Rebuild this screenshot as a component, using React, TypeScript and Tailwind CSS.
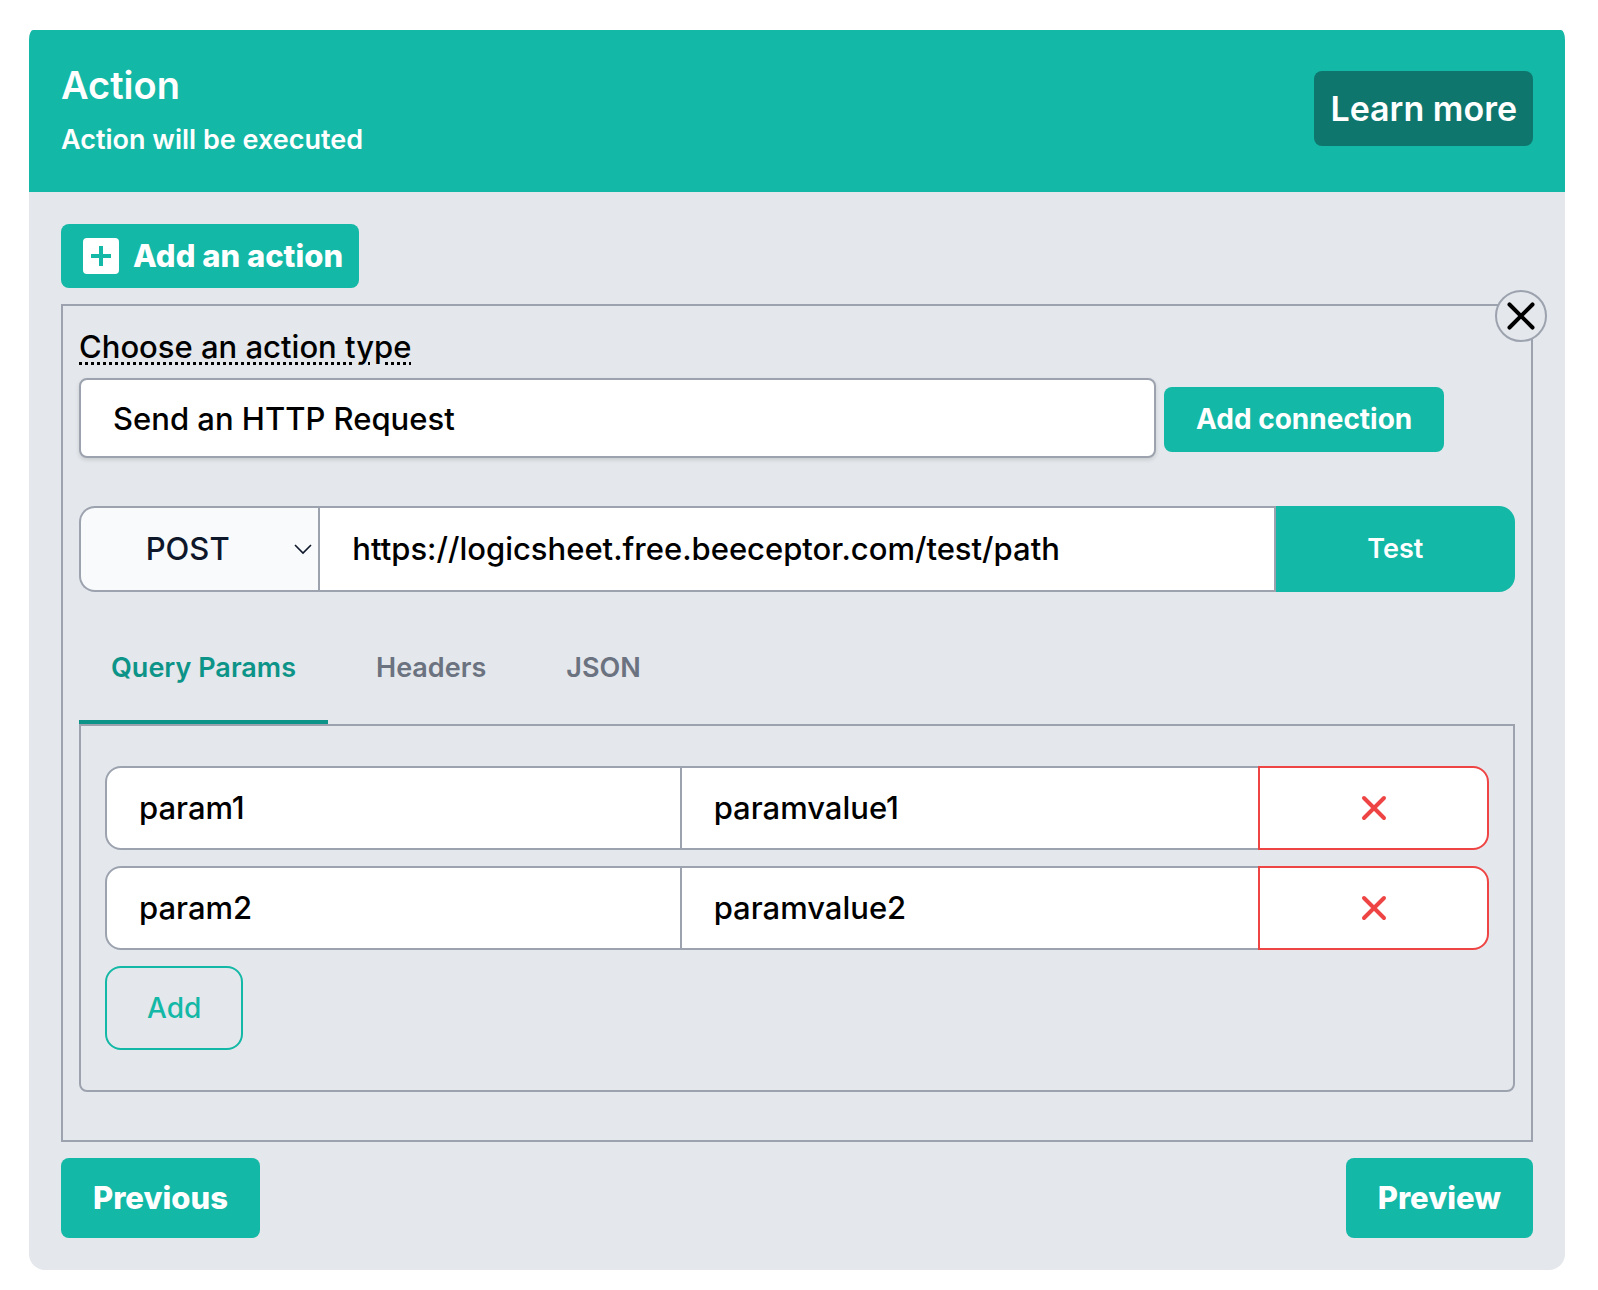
import React, { useState } from "react";

const initialParams = [
  { id: 1, name: "param1", value: "paramvalue1" },
  { id: 2, name: "param2", value: "paramvalue2" },
];

const tabs = ["Query Params", "Headers", "JSON"];

function CrossIcon({ className }: { className: string }) {
  return (
    <svg
      className={className}
      viewBox="0 0 24 24"
      fill="none"
      stroke="currentColor"
      strokeLinecap="round"
      strokeLinejoin="round"
      aria-hidden="true"
    >
      <path d="M6 18L18 6M6 6l12 12" />
    </svg>
  );
}

function PlusSquareIcon() {
  return (
    <svg className="size-12 shrink-0" viewBox="0 0 24 24" aria-hidden="true">
      <rect x="3" y="3" width="18" height="18" rx="2" fill="#fff" />
      <path d="M12 7v10M7 12h10" stroke="#14b8a6" strokeWidth="2" fill="none" />
    </svg>
  );
}

export default function App() {
  const [active, setActive] = useState("Query Params");
  const [params, setParams] = useState(initialParams);

  return (
    <main className="min-h-screen bg-white pt-[30px] pr-[33px] pb-5 pl-[29px] font-['Inter',sans-serif] text-[31px] font-medium text-black">
      <section className="overflow-hidden rounded-b-2xl bg-[#e4e7eb] [border-top-left-radius:4px_10px] [border-top-right-radius:4px_10px]">
        <header className="flex items-center justify-between bg-[#14b8a6] px-8 pt-[26px] pb-8 font-semibold text-white">
          <div>
            <h1 className="text-[38px] leading-[58px]">Action</h1>
            <p className="mt-1.5 text-[27px] leading-10">Action will be executed</p>
          </div>
          <a href="#learn" className="rounded-lg bg-[#0f766e] px-4 py-2 text-[34px] leading-[59px]">
            Learn more
          </a>
        </header>

        <div className="p-8">
          <button type="button" className="flex items-center gap-2 rounded-lg bg-[#14b8a6] px-4 py-2 leading-[48px] font-extrabold text-white">
            <PlusSquareIcon />
            Add an action
          </button>

          <div className="relative mt-4 border-2 border-[#9ca3af] px-4 pt-4 pb-12">
            <button
              type="button"
              aria-label="Remove action"
              className="absolute -top-4 -right-4 flex size-[52px] items-center justify-center rounded-full border-2 border-[#9ca3af] bg-[#e4e7eb]"
            >
              <CrossIcon className="size-[46px] shrink-0 stroke-[2.1]" />
            </button>

            <label
              htmlFor="action-type"
              className="block w-fit leading-[50px] underline decoration-dotted decoration-[3px] underline-offset-4"
            >
              Choose an action type
            </label>
            <div className="mt-1.5 flex items-center gap-2">
              <input
                id="action-type"
                defaultValue="Send an HTTP Request"
                className="h-20 w-3/4 rounded-lg border-2 border-[#9ca3af] bg-white px-8 shadow-[0_2px_4px_rgba(0,0,0,0.12)] outline-none"
              />
              <button type="button" className="mt-[3px] rounded-lg bg-[#14b8a6] px-8 text-[28px] leading-[65px] font-bold whitespace-nowrap text-white">
                Add connection
              </button>
            </div>

            <div className="mt-12 grid h-[86px] grid-cols-6">
              <div className="relative">
                <select
                  aria-label="Request method"
                  defaultValue="POST"
                  className="size-full appearance-none rounded-l-2xl border-2 border-r-0 border-[#9ca3af] bg-[#f8fafc] pr-6 text-center text-[#0f172a] outline-none [text-align-last:center]"
                >
                  <option>GET</option>
                  <option>POST</option>
                  <option>PUT</option>
                  <option>DELETE</option>
                </select>
                <svg
                  className="pointer-events-none absolute top-[37px] right-[5px] h-3 w-5"
                  viewBox="0 0 20 12"
                  fill="none"
                  stroke="#0f172a"
                  strokeWidth="1.6"
                  aria-hidden="true"
                >
                  <path d="M2 2l8 8 8-8" />
                </svg>
              </div>
              <input
                aria-label="Request URL"
                defaultValue="https://logicsheet.free.beeceptor.com/test/path"
                className="col-span-4 min-w-0 border-2 border-[#9ca3af] bg-white px-8 outline-none"
              />
              <button type="button" className="rounded-r-2xl bg-[#14b8a6] text-[27px] font-semibold text-white">
                Test
              </button>
            </div>

            <div role="tablist" className="mt-6 flex gap-4 text-[27px] font-semibold">
              {tabs.map((tab) => (
                <button
                  key={tab}
                  type="button"
                  role="tab"
                  aria-selected={tab === active}
                  onClick={() => setActive(tab)}
                  className={
                    tab === active
                      ? "border-b-4 border-[#0d9488] px-8 py-8 leading-10 text-[#0d9488]"
                      : "border-b-4 border-transparent px-8 py-8 leading-10 text-[#6b7280]"
                  }
                >
                  {tab}
                </button>
              ))}
            </div>

            <div role="tabpanel" aria-label={active} className="flex flex-col gap-4 rounded-b-lg border-2 border-[#9ca3af] px-6 py-10">
              {params.map((param) => (
                <div key={param.id} className="grid h-[84px] grid-cols-12">
                  <input
                    aria-label="Parameter name"
                    defaultValue={param.name}
                    className="col-span-5 min-w-0 rounded-l-2xl border-2 border-[#9ca3af] bg-white px-8 outline-none"
                  />
                  <input
                    aria-label="Parameter value"
                    defaultValue={param.value}
                    className="col-span-5 min-w-0 border-y-2 border-[#9ca3af] bg-white px-8 outline-none"
                  />
                  <button
                    type="button"
                    aria-label={"Remove " + param.name}
                    onClick={() => setParams(params.filter((p) => p.id !== param.id))}
                    className="col-span-2 flex items-center justify-center rounded-r-2xl border-2 border-[#ef4444] bg-white text-[#ef4444]"
                  >
                    <CrossIcon className="size-10 stroke-[2.4]" />
                  </button>
                </div>
              ))}
              <button
                type="button"
                onClick={() => setParams([...params, { id: Date.now(), name: "", value: "" }])}
                className="h-[84px] self-start rounded-2xl border-2 border-[#14b8a6] px-10 text-[28px] text-[#14b8a6]"
              >
                Add
              </button>
            </div>
          </div>

          <div className="mt-4 flex justify-between font-extrabold text-white">
            <button type="button" className="rounded-lg bg-[#14b8a6] px-8 py-4 leading-[48px]">
              Previous
            </button>
            <button type="button" className="rounded-lg bg-[#14b8a6] px-8 py-4 leading-[48px]">
              Preview
            </button>
          </div>
        </div>
      </section>
    </main>
  );
}
